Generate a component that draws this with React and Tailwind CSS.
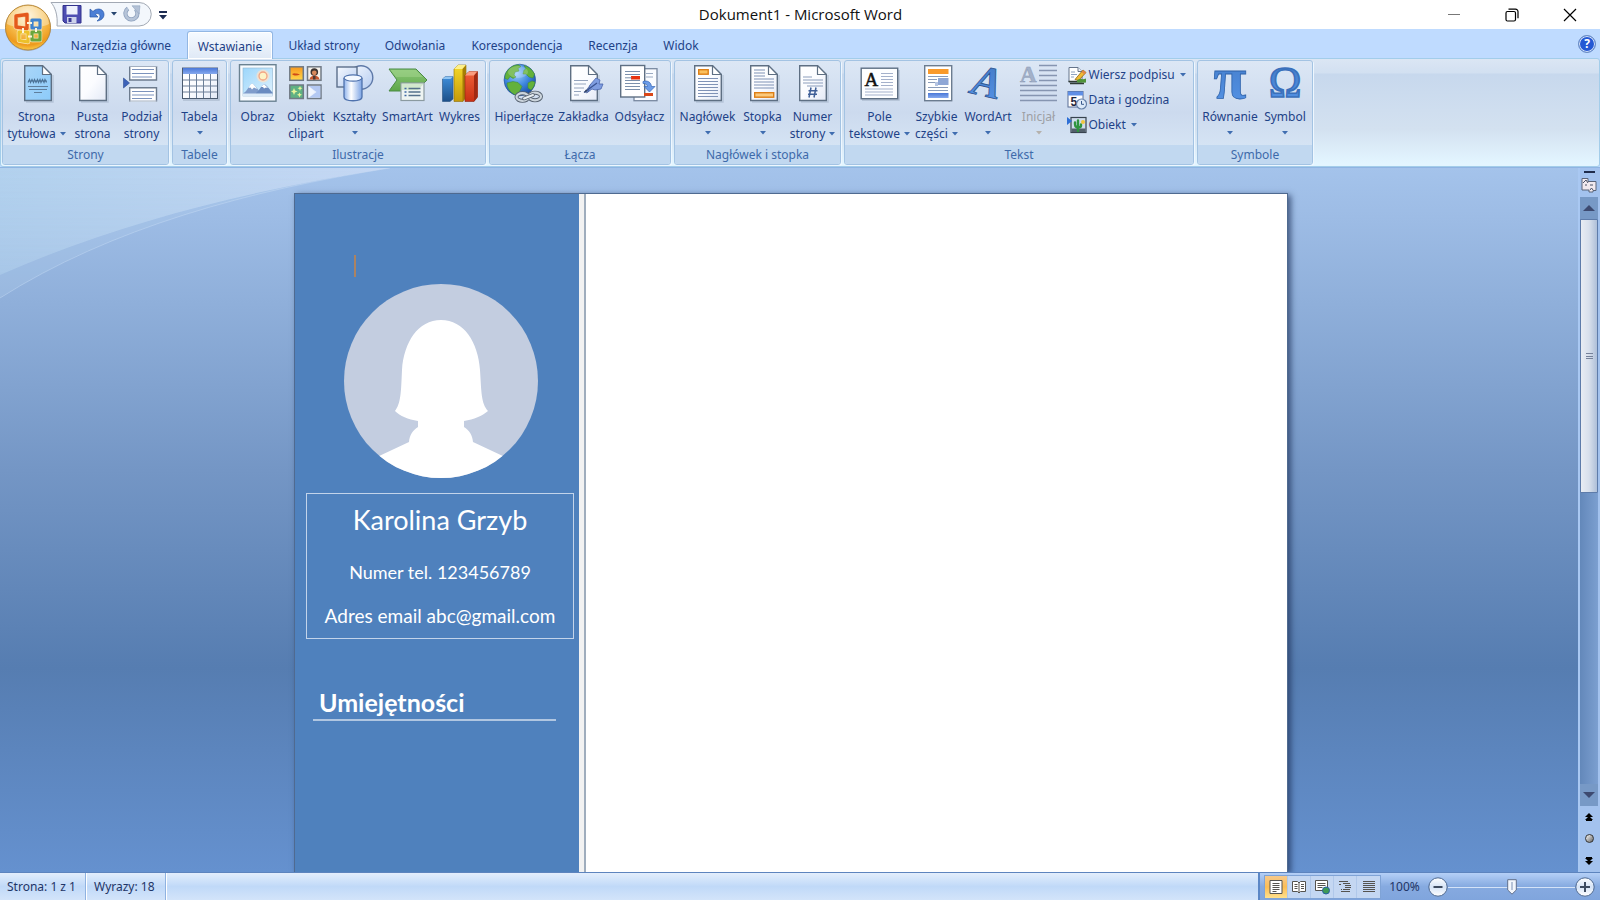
import React, { useState } from 'react';

const tabs = [
  { label: 'Narzędzia główne', width: 'w-[132px]' },
  { label: 'Wstawianie', width: 'w-[86px]' },
  { label: 'Układ strony', width: 'w-[102px]' },
  { label: 'Odwołania', width: 'w-20' },
  { label: 'Korespondencja', width: 'w-[124px]' },
  { label: 'Recenzja', width: 'w-[68px]' },
  { label: 'Widok', width: 'w-[68px]' },
];

const Caret = ({ className = '' }) => (
  <svg viewBox="0 0 6 4" className={`inline-block w-[6px] h-1 shrink-0 ${className}`} aria-hidden="true">
    <path d="M0 0h6L3 3.6z" fill="currentColor" />
  </svg>
);

/* ---------- Ribbon icons, all on a 40x40 grid ---------- */

const Icon = ({ children }) => (
  <svg viewBox="0 0 40 40" className="w-10 h-10 shrink-0 overflow-visible" aria-hidden="true">
    {children}
  </svg>
);

const Sheet = ({ x = 6, fill = 'url(#paper)' }) => (
  <g transform={`translate(${x} 1)`}>
    <path d="M2 37h27V10" fill="none" stroke="#8d9db3" strokeOpacity=".4" strokeWidth="1.4" />
    <path d="M.7.7H18.5l8.8 8.8v26H.7z" fill={fill} stroke="#5e6f83" strokeWidth="1.4" />
    <path d="M18.5.7v8.8h8.8z" fill="#fff" stroke="#5e6f83" strokeWidth="1.2" strokeLinejoin="round" />
  </g>
);

const CoverIcon = () => (
  <Icon>
    <Sheet x={7} fill="url(#skyPaper)" />
    <path d="M11 18.500l1.500-3 1 3 1.500-3 1.500 3 1-3 1.500 3 1.500-3 1 3 1.500-3 1 3 1.500-3 1.500 3 1-3 1.500 3M11 17h19" stroke="#4c7397" fill="none" strokeWidth="1.2" />
    <path d="M11 22.500h20M12 25.500h18M17 28.500h8" stroke="#5f7f9d" strokeWidth="1.2" />
  </Icon>
);

const BlankIcon = () => (
  <Icon><Sheet /></Icon>
);

const BreakIcon = () => (
  <Icon>
    <path d="M7.7 2v14H34.5V2" fill="#fff" stroke="#6c7b8e" strokeWidth="1.4" />
    <path d="M7.7 37.5V23.7H34.5V37.5" fill="#fff" stroke="#6c7b8e" strokeWidth="1.4" />
    <path d="M7 2.5h28M7 37h28" stroke="#a3afc0" />
    <path d="M10 5.5h22M10 9.5h22M10 13h20M10 27.5h22M10 31h22M10 34.5h20" stroke="#7c93bd" />
    <path d="M1.5 14l6 5-6 5z" fill="#3c62b8" stroke="#2c4c94" strokeWidth=".6" />
  </Icon>
);

const TableIcon = () => (
  <Icon>
    <path d="M3 36h36V6" fill="none" stroke="#8d9db3" strokeOpacity=".5" strokeWidth="1.4" />
    <rect x="2.5" y="4" width="35" height="30.5" fill="url(#paper)" stroke="#56677e" />
    <rect x="2.5" y="4" width="35" height="6" fill="url(#headBlue)" />
    <path d="M9.5 10v24M16.5 10v24M23.5 10v24M30.5 10v24M3 16h34M3 22h34M3 28h34" stroke="#6c7f98" />
    <path d="M2.5 4v30.5h35V10" fill="none" stroke="#4b5b70" />
  </Icon>
);

const PictureIcon = () => (
  <Icon>
    <rect x="1.5" y=".7" width="36.5" height="36.5" fill="#f7fbff" stroke="#6a8292" strokeWidth="1.4" />
    <rect x="5" y="4" width="29.5" height="28" fill="url(#sky)" stroke="#8fb5cf" strokeWidth=".6" />
    <circle cx="25" cy="12" r="6.5" fill="#ffe1c4" opacity=".7" />
    <circle cx="25" cy="12" r="4" fill="#fdf3c6" stroke="#f3a583" strokeWidth="1.3" />
    <path d="M5 29.5c4-2 6-8 9-10 3 1 6 7 9 9H34v2H5z" fill="#7f9ccb" />
    <path d="M18 29c3-2 5-7 8-9 3 1 6 6 8.500 8.500v2H18z" fill="#6a8bc0" />
    <path d="M10.500 24c1-2 2-4 3.500-4.500 2 .5 4 4 5 5.500l-3-1.500-2 2-1.500-2zM23 23l3-3 4 4-2-.5-2 1-1-1.500z" fill="#fff" />
    <path d="M5 29.500h29.500V32H5z" fill="#dcebf8" />
  </Icon>
);

const ClipartIcon = () => (
  <Icon>
    <g stroke="#707a85" strokeWidth="1.5">
      <rect x="3.8" y="2.8" width="13.5" height="13.5" fill="url(#sunset)" />
      <rect x="21.5" y="2.8" width="13.5" height="13.5" fill="#f6f1ea" />
      <rect x="3.8" y="21" width="13.5" height="13.5" fill="#5fb183" />
      <rect x="21.5" y="21" width="13.5" height="13.5" fill="#dbe7fb" />
    </g>
    <path d="M6 10c3-1.500 4 0 5-.5l3 1c-3 1.500-6 1.500-8-.5z" fill="#cf4b17" />
    <circle cx="28.300" cy="8" r="3.800" fill="#3c3431" />
    <circle cx="28.300" cy="8.800" r="2.400" fill="#d98a5c" />
    <path d="M23.500 15.500c.5-3 3-4 5-4s4.500 1 5 4z" fill="#c9582f" />
    <path d="M27 12h2.500v3.500H27z" fill="#4a3a35" />
    <path d="M8 24l1 2.500 2.500 1-2.500 1L8 31l-1-2.500-2-1 2-1zM14 22l.7 1.500 1.800.7-1.800.8-.7 2-.7-2-1.800-.8 1.800-.7zM13.500 28.500l.8 1.500 1.700.8-1.700.7-.8 2-.8-2-1.700-.7 1.700-.8z" fill="#e8f59a" />
    <path d="M22.500 22l6 6-6 5.500h11.800V22z" fill="#b3c8f3" />
    <path d="M22.500 22l8 6-8 6z" fill="#f6f9ff" opacity=".8" />
  </Icon>
);

const ShapesIcon = () => (
  <Icon>
    <circle cx="26" cy="13.500" r="11.800" fill="url(#softBlue)" stroke="#5e79a8" strokeWidth="1.4" />
    <rect x="2" y="3" width="20" height="20" fill="url(#softBlue)" stroke="#5c6f8b" strokeWidth="1.4" />
    <path d="M9 14v19c0 5 18 5 18 0V14" fill="url(#cylinder)" stroke="#4f72ad" strokeWidth="1.3" />
    <ellipse cx="18" cy="14" rx="9" ry="3.200" fill="#f3f8ff" stroke="#4f72ad" strokeWidth="1.2" />
  </Icon>
);

const SmartArtIcon = () => (
  <Icon>
    <path d="M1 5h27l11 11-11 11H1l8-11z" fill="url(#green)" stroke="#4b8b45" strokeWidth="1" strokeLinejoin="round" />
    <path d="M2.500 6h25L35 13H8z" fill="#a3d58e" opacity=".5" />
    <rect x="13" y="19" width="23" height="17.500" fill="#eef4f2" stroke="#8b9aa0" strokeWidth="1.2" />
    <path d="M13.500 19.500H36L30 26H13.500z" fill="#bfe0b5" opacity=".6" />
    <path d="M20.500 24.500h12M20.500 28h12M20.500 31.500h12" stroke="#55718c" strokeWidth="1.3" />
    <path d="M16.500 24.500h2M16.500 28h2M16.500 31.500h2" stroke="#3f68a5" strokeWidth="1.7" />
  </Icon>
);

const ChartIcon = () => (
  <Icon>
    <path d="M2.500 15l3-2.500H13V35l-3 2.500H2.500z" fill="url(#barBlue)" stroke="#26507f" strokeWidth=".6" />
    <path d="M2.500 15l3-2.500H13L10.500 15z" fill="#8fc4f2" />
    <path d="M14 5l4-4h8v32l-3 4.500h-9z" fill="url(#barYellow)" stroke="#8e6f05" strokeWidth=".6" />
    <path d="M14 5l4-4h8l-3.500 4z" fill="#fdf08a" />
    <path d="M22.500 5L26 1v32l-3.500 4.500z" fill="#a57f06" />
    <path d="M25 11.500l4-4h8.500V33L34 37.500h-9z" fill="url(#barRed)" stroke="#8b2211" strokeWidth=".6" />
    <path d="M25 11.500l4-4h8.500l-3.500 4z" fill="#fa9c7e" />
    <path d="M34 11.500l3.500-4V33L34 37.500z" fill="#a12a13" />
  </Icon>
);

const GlobeIcon = () => (
  <Icon>
    <circle cx="15.800" cy="16" r="15.800" fill="url(#globe)" stroke="#24508f" strokeWidth=".6" />
    <path d="M2.500 8C6 3 10 1 14 .8l3 1.700-3 2 1 2.500-4 1-1 3 2 2-3 1.500-3-2-2 3L1 14.500C1 12 1.500 9.500 2.500 8zM20 1.500c5 1.200 8.500 4.500 10.500 8.500l-1.500 4-4-1-3-3-3 0 1-4 2-1zM3 19l6-1.500 5 1 4 4-2 4-3 5C7.500 30 3 25 3 19zM24 19l4-2 3 1c-.5 4-2 6-4 8l-3-2z" fill="#63b13a" stroke="#3c8b2f" strokeWidth=".5" />
    <ellipse cx="14" cy="8" rx="10" ry="6" fill="#fff" opacity=".2" />
    <g fill="none" strokeLinecap="round">
      <ellipse cx="18.500" cy="33" rx="6" ry="3.800" stroke="#56616f" strokeWidth="4" />
      <ellipse cx="31" cy="32.500" rx="6" ry="3.800" stroke="#56616f" strokeWidth="4" />
      <ellipse cx="18.500" cy="33" rx="6" ry="3.800" stroke="#ccd5dd" strokeWidth="2.2" />
      <ellipse cx="31" cy="32.500" rx="6" ry="3.800" stroke="#ccd5dd" strokeWidth="2.2" />
      <path d="M20 34.500l9-3.500" stroke="#56616f" strokeWidth="3.6" />
      <path d="M20 34.500l9-3.500" stroke="#e6ecf0" strokeWidth="2" />
    </g>
  </Icon>
);

const BookmarkIcon = () => (
  <Icon>
    <Sheet />
    <path d="M10 16.500h14M10 20h12M10 24h10M10 27.500h7M10 31h5" stroke="#95a4bd" />
    <path d="M21 28l6-8 3 2-7 7z" fill="#8294bd" stroke="#495f96" strokeWidth=".7" />
    <path d="M26 21l6-7 4 2-1 4h4l-2 5-6 1-3-1-4 3z" fill="#7f9de0" stroke="#4a66ad" strokeWidth=".8" />
    <path d="M20 28.500L33 19" stroke="#3a5391" strokeWidth="1.3" />
    <path d="M20 28.500l2-3 1.500 1.500z" fill="#32415f" />
  </Icon>
);

const CrossRefIcon = () => (
  <Icon>
    <rect x="14" y="4.700" width="23" height="32" fill="#fafcff" stroke="#7888a0" strokeWidth="1.3" />
    <path d="M26 13h7M26 9.500h7" stroke="#9aaac2" />
    <rect x=".7" y="1.500" width="24" height="31.500" fill="#fff" stroke="#5e6f83" strokeWidth="1.4" />
    <path d="M5 7.500h15M5 10.500h15M5 16.500h15M5 19.500h15M5 22.500h15M5 25.500h15" stroke="#7b90ac" />
    <rect x="11" y="12" width="9" height="3.500" fill="#e8320e" />
    <path d="M11.500 13.800H5" stroke="#7b90ac" />
    <rect x="24" y="29" width="9" height="3" fill="#d94718" />
    <path d="M23 17.500c5-1.500 8 1 8.500 5H35l-5.500 5.500-5.500-5.500h3.500c-.5-2.500-2-3-4.500-3z" fill="#6c9ce8" stroke="#3567b8" strokeWidth=".7" />
  </Icon>
);

const HeaderIcon = () => (
  <Icon>
    <Sheet />
    <rect x="10.700" y="5.700" width="9.500" height="4.500" fill="#fbc05e" stroke="#dd7f17" strokeWidth="1.4" />
    <path d="M10 14.500h20M10 17.500h20M10 20.500h20M10 23.500h20M10 26.500h20M10 29.500h20M10 32.500h20" stroke="#7f92b6" strokeWidth="1.1" />
  </Icon>
);

const FooterIcon = () => (
  <Icon>
    <Sheet x={7} />
    <path d="M11 6h11M11 9h11M11 12h11M11 15h20M11 18h20M11 21h20M11 24h20" stroke="#7f92b6" strokeWidth="1.1" />
    <rect x="11.700" y="28.700" width="19" height="4.500" fill="#fbc97c" stroke="#dd7f17" strokeWidth="1.4" />
  </Icon>
);

const NumberIcon = () => (
  <Icon>
    <Sheet />
    <path d="M10 13h9M10 16h20M10 19h20M14 22h16" stroke="#8c9dbc" strokeWidth="1.1" />
    <path d="M18 23.500l-2 10M23 23.500l-2 10M15.500 26.700h9M15 30.300h9" stroke="#3f5f97" strokeWidth="1.5" />
  </Icon>
);

const TextBoxIcon = () => (
  <Icon>
    <path d="M2 36h37V6" fill="none" stroke="#8d9db3" strokeOpacity=".5" strokeWidth="1.4" />
    <rect x="1.200" y="4.200" width="36.500" height="30.500" fill="#fdfeff" stroke="#5e6f83" strokeWidth="1.4" />
    <text x="4.500" y="22" fontFamily="Liberation Serif, serif" fontSize="19" fill="#111" stroke="#111" strokeWidth=".5">A</text>
    <path d="M21 9.500h12M21 12.500h12M21 15.500h12M21 18.500h12M21 21.500h12M5 25h28M5 28h28M5 31h28" stroke="#a4b1cb" />
  </Icon>
);

const QuickPartsIcon = () => (
  <Icon>
    <rect x="7.700" y="1.700" width="27" height="35" fill="#fff" stroke="#6b7c90" strokeWidth="1.4" />
    <rect x="11" y="5" width="20.500" height="5" fill="#f99a2b" />
    <path d="M11 12.500h20M11 15.500h9M11 18.500h7M11 23.500h20M11 26.500h20" stroke="#8a9cba" />
    <rect x="21" y="14" width="10.500" height="7" fill="#8fa7d6" />
    <path d="M18 18h3v4h-3z" fill="#b6c5e2" />
    <rect x="11" y="29" width="20.500" height="5" fill="url(#headBlue)" />
  </Icon>
);

const WordArtIcon = () => (
  <Icon>
    <text x="2" y="29" transform="rotate(13 2 29)" fontFamily="Liberation Serif, serif" fontStyle="italic" fontWeight="700" fontSize="44" fill="url(#glyphBlue)" stroke="#2b528f" strokeWidth=".8">A</text>
  </Icon>
);

const DropCapIcon = () => (
  <Icon>
    <text x="1" y="18" fontFamily="Liberation Serif, serif" fontWeight="700" fontSize="23" fill="#a3b1c9" stroke="#8b9ab5" strokeWidth=".5">A</text>
    <path d="M20 1.500h18M20 6.500h18M20 11.500h18M20 16.500h18M1 21.500h37M1 26.500h37M1 31.500h37M1 36.500h37" stroke="#8695b1" strokeWidth="1.3" />
  </Icon>
);

const EquationIcon = () => (
  <Icon>
    <text x="20" y="34" textAnchor="middle" fontFamily="Liberation Serif, serif" fontWeight="700" fontSize="60" fill="url(#glyphBlue)" stroke="#2f63ab" strokeWidth=".8">π</text>
  </Icon>
);

const SymbolIcon = () => (
  <Icon>
    <text x="20" y="33" textAnchor="middle" fontFamily="Liberation Serif, serif" fontSize="44" fill="url(#glyphBlue)" stroke="#3a70bb" strokeWidth="1.6">Ω</text>
  </Icon>
);

const SignatureIcon = () => (
  <svg viewBox="0 0 20 20" className="w-5 h-5" aria-hidden="true">
    <path d="M2 2.500h9l4 4V17H2z" fill="#fff" stroke="#65748a" />
    <path d="M11 2.500v4h4" fill="#eef3fa" stroke="#65748a" />
    <path d="M4 7h4M4 9.500h6M4 12h3" stroke="#8fa3bf" />
    <path d="M1.500 16.500h17M3 18.500h14" stroke="#303b35" strokeWidth="1.4" />
    <path d="M8 14.500L16 5l3 2.500-7.500 8z" fill="#f1bb35" stroke="#8b6412" strokeWidth=".8" />
    <path d="M16 5l3 2.500-1.500 2L14.500 7z" fill="#e0874a" />
    <path d="M10 15.500c3-3 5 0 9-2v4h-9z" fill="#4f9438" />
  </svg>
);

const DateIcon = () => (
  <svg viewBox="0 0 20 20" className="w-5 h-5" aria-hidden="true">
    <rect x="1" y="1.500" width="15" height="15.500" fill="#fff" stroke="#586d94" />
    <rect x="1" y="1.500" width="15" height="4" fill="#5f8fe6" />
    <text x="3.500" y="15.500" fontFamily="Liberation Sans, sans-serif" fontWeight="700" fontSize="12" fill="#1c2740">5</text>
    <circle cx="14.500" cy="14" r="5" fill="#dce9f8" stroke="#6681a8" strokeWidth="1.2" />
    <path d="M14.500 11v3.300H17" stroke="#3a5a8d" fill="none" />
  </svg>
);

const ObjectIcon = () => (
  <svg viewBox="0 0 20 20" className="w-5 h-5" aria-hidden="true">
    <rect x="4" y="2.500" width="15" height="15" fill="#cfdcec" stroke="#38434f" strokeWidth="1.2" />
    <path d="M4.500 13.500h14v3.500h-14z" fill="#53606c" />
    <path d="M8 9V7.500M11 16V5.500M14 11V9.500M8 9.500c0 3 3 3 3 3s3 0 3-2" stroke="#2f9440" strokeWidth="2.4" fill="none" strokeLinecap="round" />
    <circle cx="16" cy="7" r="2" fill="#f1c63c" />
    <path d="M0 2l5 4-5 4z" fill="#2e6fd6" />
  </svg>
);

const IconGradients = () => (
  <svg className="absolute w-0 h-0" aria-hidden="true">
    <defs>
      <linearGradient id="paper" x1="0" y1="0" x2="1" y2="1"><stop stopColor="#fff" /><stop offset=".5" stopColor="#fbfcff" /><stop offset="1" stopColor="#e3e9f6" /></linearGradient>
      <linearGradient id="skyPaper" x1="0" y1="0" x2="1" y2="1"><stop stopColor="#a9d5f8" /><stop offset="1" stopColor="#8ccbfa" /></linearGradient>
      <linearGradient id="headBlue" x1="0" y1="0" x2="0" y2="1"><stop stopColor="#4a78d8" /><stop offset="1" stopColor="#86a9ee" /></linearGradient>
      <linearGradient id="sky" x1="0" y1="0" x2="1" y2="1"><stop stopColor="#9cd6fb" /><stop offset="1" stopColor="#dff2fd" /></linearGradient>
      <linearGradient id="sunset" x1="0" y1="0" x2="0" y2="1"><stop stopColor="#f7971e" /><stop offset="1" stopColor="#ffd84a" /></linearGradient>
      <linearGradient id="softBlue" x1="0" y1="0" x2="1" y2="1"><stop stopColor="#f5f9ff" /><stop offset="1" stopColor="#b4cbf0" /></linearGradient>
      <linearGradient id="cylinder"><stop stopColor="#8fb3ec" /><stop offset=".4" stopColor="#fff" /><stop offset="1" stopColor="#7ba3e4" /></linearGradient>
      <linearGradient id="green" x1="0" y1="0" x2="0" y2="1"><stop stopColor="#8cc878" /><stop offset="1" stopColor="#5da648" /></linearGradient>
      <linearGradient id="barBlue" x1="0" y1="0" x2="0" y2="1"><stop stopColor="#3f8fdc" /><stop offset="1" stopColor="#1c4f88" /></linearGradient>
      <linearGradient id="barYellow" x1="0" y1="0" x2="0" y2="1"><stop stopColor="#f6d928" /><stop offset="1" stopColor="#c49a0b" /></linearGradient>
      <linearGradient id="barRed" x1="0" y1="0" x2="0" y2="1"><stop stopColor="#f0623a" /><stop offset="1" stopColor="#c93014" /></linearGradient>
      <radialGradient id="globe" cx=".4" cy=".3" r=".8"><stop stopColor="#9fd0fb" /><stop offset=".5" stopColor="#3d86de" /><stop offset="1" stopColor="#123f93" /></radialGradient>
      <linearGradient id="glyphBlue" x1="0" y1="0" x2="0" y2="1"><stop stopColor="#4279c4" /><stop offset="1" stopColor="#5594e8" /></linearGradient>
      <radialGradient id="orb" cx=".5" cy=".25" r=".8"><stop stopColor="#fdf0cf" /><stop offset=".5" stopColor="#f6bd4e" /><stop offset=".8" stopColor="#ee9a1d" /><stop offset="1" stopColor="#ffe25a" /></radialGradient>
      <linearGradient id="knob" x1="0" y1="0" x2="0" y2="1"><stop stopColor="#fff" /><stop offset=".5" stopColor="#d5e3f6" /><stop offset="1" stopColor="#fff" /></linearGradient>
    </defs>
  </svg>
);

/* ---------- Ribbon data ---------- */

const groups = [
  {
    name: 'Strony', width: 'w-[167px]',
    items: [
      { lines: ['Strona', 'tytułowa'], icon: CoverIcon, menu: true, width: 'w-[67px]' },
      { lines: ['Pusta', 'strona'], icon: BlankIcon, width: 'w-[45px]' },
      { lines: ['Podział', 'strony'], icon: BreakIcon, width: 'w-[53px]' },
    ],
  },
  {
    name: 'Tabele', width: 'w-[55px]',
    items: [{ lines: ['Tabela'], icon: TableIcon, menu: true, width: 'w-[53px]' }],
  },
  {
    name: 'Ilustracje', width: 'w-[256px]',
    items: [
      { lines: ['Obraz'], icon: PictureIcon, width: 'w-[51px]' },
      { lines: ['Obiekt', 'clipart'], icon: ClipartIcon, width: 'w-[46px]' },
      { lines: ['Kształty'], icon: ShapesIcon, menu: true, width: 'w-[51px]' },
      { lines: ['SmartArt'], icon: SmartArtIcon, width: 'w-[55px]' },
      { lines: ['Wykres'], icon: ChartIcon, width: 'w-[49px]' },
    ],
  },
  {
    name: 'Łącza', width: 'w-[182px]',
    items: [
      { lines: ['Hiperłącze'], icon: GlobeIcon, width: 'w-[63px]' },
      { lines: ['Zakładka'], icon: BookmarkIcon, width: 'w-[56px]' },
      { lines: ['Odsyłacz'], icon: CrossRefIcon, width: 'w-[56px]' },
    ],
  },
  {
    name: 'Nagłówek i stopka', width: 'w-[167px]',
    items: [
      { lines: ['Nagłówek'], icon: HeaderIcon, menu: true, width: 'w-[60px]' },
      { lines: ['Stopka'], icon: FooterIcon, menu: true, width: 'w-[50px]' },
      { lines: ['Numer', 'strony'], icon: NumberIcon, menu: true, width: 'w-[50px]' },
    ],
  },
  {
    name: 'Tekst', width: 'w-[350px]',
    items: [
      { lines: ['Pole', 'tekstowe'], icon: TextBoxIcon, menu: true, width: 'w-[64px]' },
      { lines: ['Szybkie', 'części'], icon: QuickPartsIcon, menu: true, width: 'w-[50px]' },
      { lines: ['WordArt'], icon: WordArtIcon, menu: true, width: 'w-[53px]' },
      { lines: ['Inicjał'], icon: DropCapIcon, menu: true, disabled: true, width: 'w-[48px]' },
    ],
    small: [
      { label: 'Wiersz podpisu', icon: SignatureIcon, menu: true },
      { label: 'Data i godzina', icon: DateIcon },
      { label: 'Obiekt', icon: ObjectIcon, menu: true },
    ],
  },
  {
    name: 'Symbole', width: 'w-[116px]',
    items: [
      { lines: ['Równanie'], icon: EquationIcon, menu: true, width: 'w-[60px]' },
      { lines: ['Symbol'], icon: SymbolIcon, menu: true, width: 'w-[50px]' },
    ],
  },
];

const RibbonButton = ({ item }) => {
  const ItemIcon = item.icon;
  const [first, second] = item.lines;
  return (
    <button
      type="button"
      disabled={item.disabled}
      className={`${item.width} flex flex-col items-center text-[12px] leading-[17px] whitespace-nowrap text-[#1e4287] disabled:text-[#9d9fa4]`}
    >
      <ItemIcon />
      <span className="mt-1">{first}</span>
      {second ? (
        <span className="flex items-center gap-1">
          {second}
          {item.menu && <Caret className="text-[#3f6db0]" />}
        </span>
      ) : (
        item.menu && <Caret className={item.disabled ? 'mt-[6px] text-[#b5b1ac]' : 'mt-[6px] text-[#3f6db0]'} />
      )}
    </button>
  );
};

const RibbonGroup = ({ group }) => (
  <section
    aria-label={group.name}
    className={`${group.width} shrink-0 flex flex-col rounded-[3px] border border-[#a3c3e3] bg-linear-to-b from-[#dce7f5] via-[#ccdaee] to-[#dae9f7] shadow-[1px_1px_0_#eef7ff]`}
  >
    <div className="flex-1 flex justify-center items-start pt-[3px]">
      {group.items.map((item) => (
        <RibbonButton key={item.lines[0]} item={item} />
      ))}
      {group.small && (
        <div className="w-[128px] flex flex-col pl-1">
          {group.small.map((s) => (
            <button key={s.label} type="button" className="h-[25px] pb-1 flex items-center gap-[2px] text-[12px] text-[#1e4287] whitespace-nowrap">
              <s.icon />
              {s.label}
              {s.menu && <Caret className="ml-[3px] text-[#3f6db0]" />}
            </button>
          ))}
        </div>
      )}
    </div>
    <h2 className="h-[19px] leading-5 rounded-b-[2px] bg-[#c1d8f0] text-center text-[12px] text-[#3e6aaa]">{group.name}</h2>
  </section>
);

/* ---------- Window chrome ---------- */

const OfficeButton = () => (
  <button type="button" aria-label="Przycisk pakietu Office" className="absolute left-1 top-1 z-20 w-12 h-12">
    <svg viewBox="0 0 48 48" className="w-12 h-12">
      <circle cx="24" cy="24" r="23" fill="#8792a8" opacity=".5" />
      <circle cx="24" cy="23.500" r="22.500" fill="url(#orb)" stroke="#b98a3c" strokeWidth="1" />
      <path d="M3 20a21 18 0 0 1 42 0c-10 5-32 5-42 0z" fill="#fff" opacity=".35" />
      <g fill="none" strokeLinejoin="round">
        <path d="M12 12l11-1.500v14L12 23z" stroke="#fbd9a8" strokeWidth="5" />
        <path d="M28 16h8v8h-8zM15 28h9v10l-9-1.500zM28 28h8v8h-8z" stroke="#fbe6b8" strokeWidth="4.4" />
        <path d="M12 12l11-1.500v14L12 23z" stroke="#e4591c" strokeWidth="3.4" />
        <path d="M28 16h8v8h-8z" stroke="#3f83cf" strokeWidth="3.2" />
        <path d="M15 28h9v10l-9-1.500z" stroke="#ecc02a" strokeWidth="3.2" />
        <path d="M28 28h8v8h-8z" stroke="#6aa63c" strokeWidth="3.2" />
        <path d="M23 19h5M19 24v5M24 32.500h4M32 24v4" stroke="#fff6dc" strokeWidth="2" />
      </g>
    </svg>
  </button>
);

const QuickAccess = () => (
  <div className="absolute left-[50px] top-0 z-10 flex items-center">
    <div className="relative flex items-center h-[27px] w-[102px] pl-3">
      <svg viewBox="0 0 102 27" className="absolute inset-0 w-full h-full" aria-hidden="true">
        <path d="M1 2.500h88a12 11.500 0 0 1 0 23.500H7C8 15 5 7 1 2.500z" fill="#f3f7fc" stroke="#a2a9b4" />
      </svg>
      <button type="button" aria-label="Zapisz" className="relative">
        <svg viewBox="0 0 20 20" className="w-5 h-5">
          <path d="M1 1.500h18V19H3l-2-2z" fill="#4d4db2" stroke="#32328c" />
          <rect x="4.500" y="2" width="11" height="8.500" fill="#eef1fc" />
          <rect x="5" y="13" width="9.500" height="6" fill="#ccd2ea" />
          <rect x="6.500" y="14" width="3" height="4" fill="#3a3a94" />
        </svg>
      </button>
      <button type="button" aria-label="Cofnij" className="relative ml-[7px]">
        <svg viewBox="0 0 16 16" className="w-4 h-4">
          <path d="M1 3v8h8L6.500 8.500C8.500 6.500 11 8 11 10.500S9 14 8 15c4-.5 7-3 7-6.500C15 3 8.500 1 4 5.500z" fill="#4b7fd6" stroke="#2a57a6" strokeWidth=".7" />
        </svg>
      </button>
      <button type="button" aria-label="Lista cofania" className="relative ml-[6px] flex text-[#26456f]"><Caret /></button>
      <button type="button" aria-label="Powtórz" className="relative ml-[6px]">
        <svg viewBox="0 0 18 18" className="w-[18px] h-[18px]">
          <path d="M5 3.500A6 6 0 1 0 12.500 4" fill="none" stroke="#8fa2be" strokeWidth="4.2" />
          <path d="M5 3.500A6 6 0 1 0 12.500 4" fill="none" stroke="#b6c4d8" strokeWidth="2.6" />
          <path d="M9 .8h8l-1 8z" fill="#b3c1d6" stroke="#8fa2be" strokeWidth=".6" />
        </svg>
      </button>
    </div>
    <button type="button" aria-label="Dostosuj pasek" className="ml-[7px] pt-1">
      <svg viewBox="0 0 8 9" className="w-2 h-[9px]"><path d="M0 0h8v2H0zM0 4h8L4 8.500z" fill="#1d2c52" /></svg>
    </button>
  </div>
);

const TitleBar = () => (
  <header className="h-[29px] bg-white flex items-center">
    <div className="w-44" />
    <h1 className="flex-1 text-center text-[15px] text-[#111] font-['Open_Sans','Noto_Sans',sans-serif]">Dokument1 - Microsoft Word</h1>
    <div className="w-[174px] mr-px h-full flex items-center text-black">
      <button type="button" aria-label="Minimalizuj" className="flex-1 flex justify-center">
        <svg viewBox="0 0 14 14" className="w-[14px] h-[14px]"><path d="M1 6.500h12" stroke="#777" /></svg>
      </button>
      <button type="button" aria-label="Przywróć" className="flex-1 flex justify-center">
        <svg viewBox="0 0 14 14" className="w-[14px] h-[14px]" fill="none" stroke="#000" strokeWidth="1.2">
          <rect x="1" y="3.500" width="9.500" height="9.500" rx="1.500" />
          <path d="M3.500 1.200h7a2.500 2.500 0 0 1 2.500 2.500v6.500" />
        </svg>
      </button>
      <button type="button" aria-label="Zamknij" className="flex-1 flex justify-center">
        <svg viewBox="0 0 14 14" className="w-[14px] h-[14px]"><path d="M1 1l12 12M13 1L1 13" stroke="#000" strokeWidth="1.2" /></svg>
      </button>
    </div>
  </header>
);

const TabRow = ({ active, onSelect }) => (
  <nav className="h-[30px] pl-[55px] pr-1 flex items-end bg-[#bfdbff]">
    {tabs.map((tab) => (
      <button
        key={tab.label}
        type="button"
        onClick={() => onSelect(tab.label)}
        className={`${tab.width} h-7 pt-[2px] text-[12px] whitespace-nowrap text-[#1e4287] ${
          active === tab.label
            ? 'relative z-10 rounded-t-[3px] border border-b-0 border-[#93b7e3] bg-linear-to-b from-[#f6faff] to-[#dfe9f6] shadow-[inset_0_0_0_1px_#fff]'
            : ''
        }`}
      >
        {tab.label}
      </button>
    ))}
    <button type="button" aria-label="Pomoc" className="ml-auto mb-[6px] w-[18px] h-[18px] rounded-full border border-[#6d8fc4] bg-[#2458d4] shadow-[inset_0_0_0_1px_#dbe8fb] text-white text-[12px] leading-none font-bold">
      ?
    </button>
  </nav>
);

/* ---------- Document ---------- */

const Swoosh = () => (
  <svg viewBox="0 0 400 140" className="absolute left-0 top-0 w-[400px] h-[140px]" aria-hidden="true">
    <defs>
      <linearGradient id="swoosh"><stop stopColor="#b4d3ee" stopOpacity=".85" /><stop offset="1" stopColor="#cbdbf5" stopOpacity=".85" /></linearGradient>
      <linearGradient id="fade" x1="0" y1="0" x2="0" y2="1"><stop stopColor="#fff" /><stop offset="1" stopColor="#fff" stopOpacity=".45" /></linearGradient>
      <mask id="swooshMask"><rect width="400" height="140" fill="url(#fade)" /></mask>
    </defs>
    <path d="M0 0h390C250 22 110 60 0 130z" fill="#b5d2ee" opacity=".28" />
    <path d="M0 130C110 60 250 22 390 0" fill="none" stroke="#c3d9f3" strokeOpacity=".5" />
    <path d="M0 0h390C250 22 120 54 0 107z" fill="url(#swoosh)" mask="url(#swooshMask)" />
  </svg>
);

const Avatar = () => (
  <svg viewBox="0 0 194 194" className="block w-[194px] h-[194px]" role="img" aria-label="Zdjęcie">
    <clipPath id="round"><circle cx="97" cy="97" r="97" /></clipPath>
    <circle cx="97" cy="97" r="97" fill="#c3cde0" />
    <path
      clipPath="url(#round)"
      fill="#fff"
      d="M97 36c23 0 37 22 39 50 1.500 22 1 33 8 41-6 5-14 8.500-24 10v6c5 3 8.500 8 9 15l32 15v30H33v-30l32-15c.5-7 4-12 9-15v-6c-10-1.500-18-5-23-10 6-8 6-19 7-41 2-28 16-50 39-50z"
    />
  </svg>
);

const Page = () => (
  <article className="relative w-[994px] max-w-full flex bg-white border-t border-x border-[#4f6a90] shadow-[3px_2px_6px_rgba(30,50,90,0.7)]">
    <aside className="w-[284px] shrink-0 bg-[#4f81bd] text-white font-[Lato,'Open_Sans',sans-serif]">
      <div className="ml-[59px] mt-[61px] w-[2px] h-[22px] bg-[#ac8362]" />
      <div className="ml-[49px] mt-[7px]"><Avatar /></div>
      <div className="ml-[11px] mr-[5px] mt-[15px] h-[146px] border border-[#c3d4ea] text-center whitespace-nowrap">
        <h2 className="mt-2 text-[27px] leading-9">Karolina Grzyb</h2>
        <p className="mt-[22px] text-[18px] leading-6">Numer tel. 123456789</p>
        <p className="mt-5 text-[19px] leading-6">Adres email abc@gmail.com</p>
      </div>
      <div className="ml-[18px] mr-[23px] mt-[50px] border-b-2 border-[#b0c6e1] pb-1">
        <h3 className="pl-[6px] text-[25px] leading-[26px] font-bold">Umiejętności</h3>
      </div>
    </aside>
    <div className="w-[5px] bg-[#f2f2f2]" />
    <div className="w-[2px] bg-[#9fadbd]" />
    <div className="flex-1" />
  </article>
);

const ScrollBar = () => (
  <div className="w-[22px] shrink-0 flex flex-col items-center pr-[2px] border-l-2 border-[#a9c8f2] bg-[#a3c2ee]">
    <div className="mt-[3px] w-[11px] h-[2px] bg-[#1f2c4c]" />
    <button type="button" aria-label="Linijka" className="mt-1 mb-1">
      <svg viewBox="0 0 16 16" className="w-4 h-4">
        <path d="M1 1.500h6v3h8v9h-3v1.500H8V13H1z" fill="#f1e9ee" stroke="#5b6478" />
        <path d="M2 6l3-3 2 3M9 13l1.500-2 1.500 2M4 8h2M9 8h3" stroke="#4b5367" fill="none" />
      </svg>
    </button>
    <div className="flex-1 w-[18px] flex flex-col bg-linear-to-r from-[#6388ba] to-[#7c9fd0] text-[#3d4a70]">
      <button type="button" aria-label="W górę" className="h-[22px] flex justify-center items-center bg-[#7799c6]">
        <svg viewBox="0 0 12 6" className="w-3 h-[6px]"><path d="M0 6l6-6 6 6z" fill="currentColor" /></svg>
      </button>
      <div className="h-[274px] border border-[#5e7caa] rounded-[1px] bg-linear-to-r from-[#e9edf3] via-[#d8e0ec] to-[#aebfd8] flex items-center justify-center">
        <div className="w-[7px] h-[6px] border-y border-[#76829a] flex items-center"><div className="w-full h-px bg-[#76829a]" /></div>
      </div>
      <button type="button" aria-label="W dół" className="mt-auto h-[22px] flex justify-center items-center bg-[#7799c6]">
        <svg viewBox="0 0 12 6" className="w-3 h-[6px]"><path d="M0 0l6 6 6-6z" fill="currentColor" /></svg>
      </button>
    </div>
    <div className="h-[66px] flex flex-col items-center justify-around">
      <button type="button" aria-label="Poprzednia strona">
        <svg viewBox="0 0 8 8" className="w-2 h-2"><path d="M4 0l4 4H0zM4 3l4 4H0zM1 7h6v1H1z" /></svg>
      </button>
      <button type="button" aria-label="Wybierz obiekt" className="w-[9px] h-[9px] rounded-full border border-[#333] bg-linear-to-br from-white to-[#666]" />
      <button type="button" aria-label="Następna strona">
        <svg viewBox="0 0 8 8" className="w-2 h-2"><path d="M4 8l4-4H0zM4 5l4-4H0zM1 0h6v1H1z" /></svg>
      </button>
    </div>
  </div>
);

/* ---------- Status bar ---------- */

const viewIcons = [
  { label: 'Układ wydruku', art: <path d="M2 1.500h12v13H2zM4.500 4.500h7M4.500 6.500h7M4.500 8.500h7M4.500 10.500h7M4.500 12.500h4" fill="#fff" /> },
  { label: 'Czytanie', art: <path d="M1.500 2.500h5L8 4l1.500-1.500h5v10h-5L8 14l-1.500-1.500h-5zM8 4v10M3.500 5.500h3M3.500 7.500h3M3.500 9.500h3M10 5.500h3M10 7.500h3M10 9.500h3" fill="#fff" /> },
  { label: 'Sieć Web', art: <><path d="M1.500 1.500h12v10h-12zM3.500 4.500h8M3.500 6.500h8M3.500 8.500h5" fill="#fff" /><circle cx="12" cy="11.500" r="3.500" fill="#3f9a55" stroke="#265f9f" /></> },
  { label: 'Konspekt', art: <path d="M2 2.500h9M6 4.500h7M8 6.500h6M8 8.500h6M6 10.500h7M4 12.500h9M2 5.500h2M4 10.500h1" fill="none" /> },
  { label: 'Wersja robocza', art: <path d="M2 2.500h12M2 4.500h12M2 6.500h12M2 8.500h12M2 10.500h12M2 12.500h12" fill="none" /> },
];

const StatusBar = () => {
  const [zoom, setZoom] = useState(50);
  return (
    <footer className="h-7 shrink-0 flex items-stretch border-t border-[#5d84be] bg-linear-to-b from-[#e3eefc] via-[#c0d9f8] to-[#d3e4fa] text-[12px] text-[#1f3566]">
      <span className="w-[86px] pl-[7px] flex items-center border-r border-[#8fb2e0] shadow-[1px_0_0_#fff]">Strona: 1 z 1</span>
      <span className="w-20 pl-2 flex items-center border-r border-[#8fb2e0] shadow-[1px_0_0_#fff]">Wyrazy: 18</span>
      <div className="ml-auto w-[342px] flex items-center border-l-2 border-[#5b87c6] pl-1 bg-linear-to-b from-[#b5d0f7] via-[#86aae0] to-[#80a5dd]">
        <div className="flex h-[24px] border border-[#7fa3d6] bg-[#c4d7f2]">
          {viewIcons.map((v, i) => (
            <button
              key={v.label}
              type="button"
              aria-label={v.label}
              className={`w-[23px] flex items-center justify-center border-r border-[#b0c8ea] last:border-r-0 ${i === 0 ? 'bg-linear-to-b from-[#f6c98a] via-[#fbbd55] to-[#fee08c]' : ''}`}
            >
              <svg viewBox="0 0 16 16" className="w-4 h-4" stroke="#55534f">{v.art}</svg>
            </button>
          ))}
        </div>
        <span className="w-[47px] text-center">100%</span>
        <button type="button" aria-label="Pomniejsz">
          <svg viewBox="0 0 20 20" className="w-5 h-5"><circle cx="10" cy="10" r="9.200" fill="url(#knob)" stroke="#4d6890" /><path d="M5.500 10h9" stroke="#3d4b60" strokeWidth="2" /></svg>
        </button>
        <div className="relative flex-1 h-5">
          <svg viewBox="0 0 10 20" preserveAspectRatio="none" className="absolute inset-0 w-full h-full" aria-hidden="true">
            <path d="M0 10.500h10" stroke="#d4e3f8" vectorEffect="non-scaling-stroke" />
          </svg>
          <div className="absolute inset-y-0 flex items-center -ml-[5px]" style={{ left: `${zoom}%` }}>
            <svg viewBox="0 0 10 16" className="w-[10px] h-4"><path d="M.7.7h8.600V11L5 15.200.7 11z" fill="#f2f6fc" stroke="#5f6f8c" /><path d="M5 3v8" stroke="#b6c3d8" strokeWidth="2" /></svg>
          </div>
          <input
            type="range"
            aria-label="Powiększenie"
            value={zoom}
            onChange={(e) => setZoom(Number(e.target.value))}
            className="absolute inset-0 w-full h-full opacity-0"
          />
        </div>
        <button type="button" aria-label="Powiększ" className="mr-[5px]">
          <svg viewBox="0 0 20 20" className="w-5 h-5"><circle cx="10" cy="10" r="9.200" fill="url(#knob)" stroke="#4d6890" /><path d="M5 10h10M10 5v10" stroke="#3d4b60" strokeWidth="2" /></svg>
        </button>
      </div>
    </footer>
  );
};

const App = () => {
  const [activeTab, setActiveTab] = useState('Wstawianie');

  return (
    <div className="relative h-screen flex flex-col overflow-hidden bg-[#bfdbff] font-['Noto_Sans','Open_Sans',sans-serif]">
      <IconGradients />
      <OfficeButton />
      <QuickAccess />
      <TitleBar />
      <TabRow active={activeTab} onSelect={setActiveTab} />

      {/* Ribbon */}
      <div className="-mt-px h-[109px] shrink-0 px-px pt-px pb-px flex gap-[3px] rounded-[3px] border border-[#a3cdea] bg-[linear-gradient(to_bottom,#dbe6f4_0,#d2e0f1_14px,#c7d8ed_15px,#d3e1f0_70px,#e3f5ff_104px)]">
        {groups.map((group) => (
          <RibbonGroup key={group.name} group={group} />
        ))}
      </div>

      {/* Workspace */}
      <main className="flex-1 min-h-0 flex border-t border-[#8fb4e2]">
        <div className="relative flex-1 overflow-hidden flex justify-center pl-1 pt-[25px] bg-[linear-gradient(to_bottom,#a4c3eb_0%,#9dbce5_7%,#7496c5_43%,#567db1_71%,#6591cf_100%)]">
          <Swoosh />
          <Page />
        </div>
        <ScrollBar />
      </main>

      <StatusBar />
    </div>
  );
};

export default App;
